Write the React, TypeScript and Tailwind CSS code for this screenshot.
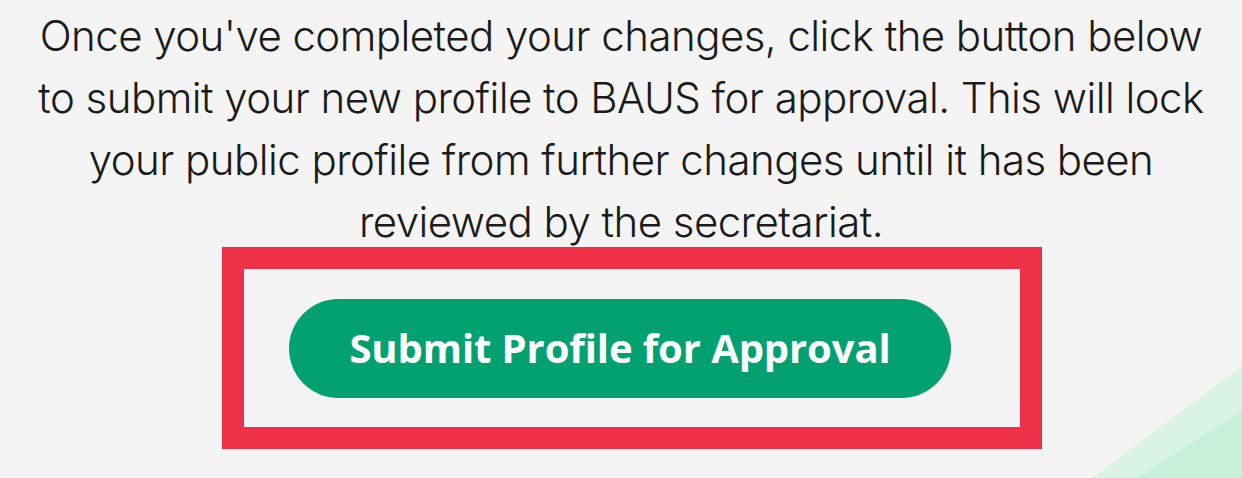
import React from "react";

export default function App() {
  return (
    <div className="relative w-full h-[478px] overflow-hidden bg-[#f4f4f4]">
      <svg
        className="absolute right-0 bottom-0"
        width="150"
        height="112"
        viewBox="0 0 150 112"
      >
        <polygon points="0,112 150,0 150,112" fill="#d9f3e5" />
        <polygon points="45,112 150,45 150,112" fill="#c7f0db" />
      </svg>

      <div className="relative flex flex-col pt-[5px]">
        <p className="mx-auto w-[1180px] text-center text-[42px] leading-[62px] font-light tracking-[-0.55px] text-[#1b1b1b] font-['Inter',sans-serif]">
          Once you've completed your changes, click the button below to submit your new
          profile to BAUS for approval. This will lock your public profile from further
          changes until it has been reviewed by the secretariat.
        </p>

        <div className="ml-[222px] mt-[-6px] w-[820px] h-[202px] border-[22px] border-[#ee3049] flex items-center pl-[45px]">
          <button className="w-[662px] h-[99px] rounded-full bg-[#03a16f] text-white text-[40px] font-bold tracking-[-0.1px] font-['Open_Sans',sans-serif]">
            Submit Profile for Approval
          </button>
        </div>
      </div>
    </div>
  );
}
